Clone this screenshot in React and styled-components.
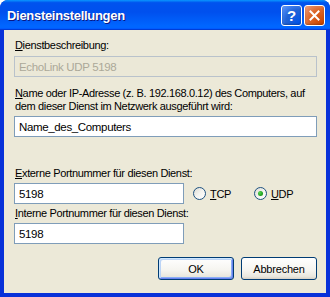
import React from "react";
import styled, { createGlobalStyle } from "styled-components";

const Global = createGlobalStyle`
  html, body {
    margin: 0;
    padding: 0;
    background: #ffffff;
  }
  body {
    font-family: "Liberation Sans", Arial, sans-serif;
    font-size: 11px;
  }
`

const Window = styled.div`
  width: 330px;
  height: 297px;
  box-sizing: border-box;
  display: flex;
  flex-direction: column;
  background: #0831d9;
  border-radius: 8px 8px 0 0;
  overflow: hidden;
`

const TitleBar = styled.div`
  height: 30px;
  flex: none;
  display: flex;
  align-items: center;
  justify-content: space-between;
  padding: 0 5px 0 7px;
  background: linear-gradient(
    180deg,
    #0997ff 0%,
    #0053ee 9%,
    #0050ee 40%,
    #0066ff 86%,
    #0066ff 92%,
    #005bff 95%,
    #003dd7 97%,
    #003dd7 100%
  );
`

const Title = styled.span`
  color: #ffffff;
  font-family: "Liberation Sans", Arial, sans-serif;
  font-weight: bold;
  font-size: 13px;
  letter-spacing: -0.3px;
  text-shadow: 1px 1px #0a1883;
`

const Controls = styled.div`
  display: flex;
  gap: 2px;
`

const CtrlButton = styled.div`
  width: 21px;
  height: 21px;
  box-sizing: border-box;
  border: 1px solid #ffffff;
  border-radius: 3px;
  display: flex;
  align-items: center;
  justify-content: center;
  color: #ffffff;
  font-weight: bold;
  font-size: 15px;
  background: ${(p) =>
    p.$close
      ? "radial-gradient(circle at 90% 90%, #cc4600 0%, #dc6527 55%, #e5855a 80%, #f2a684 100%)"
      : "radial-gradient(circle at 90% 90%, #0054e9 0%, #2263d5 55%, #4382f1 80%, #6b9cf5 100%)"};
  box-shadow: inset 0 -1px 2px rgba(0, 0, 0, 0.25);
`

const Client = styled.div`
  flex: 1;
  margin: 0 4px 4px 4px;
  background: #ece9d8;
  padding: 9px 9px 0 10px;
  display: flex;
  flex-direction: column;
  color: #000000;
  letter-spacing: -0.35px;
`

const Label = styled.div`
  line-height: 13px;
  padding-left: 1px;
  margin-top: ${(p) => p.$top || 0}px;
  white-space: nowrap;
`

const Key = styled.span`
  text-decoration: underline;
  text-underline-offset: 1px;
`

const Field = styled.div`
  height: 21px;
  box-sizing: border-box;
  width: ${(p) => p.$width || "auto"};
  margin-top: ${(p) => p.$top ?? 3}px;
  border: 1px solid ${(p) => (p.$disabled ? "#b9c2cb" : "#7f9db9")};
  background: ${(p) => (p.$disabled ? "#ebe8d7" : "#ffffff")};
  color: ${(p) => (p.$disabled ? "#aca899" : "#000000")};
  display: flex;
  align-items: center;
  padding-left: 4px;
  font-size: 11.5px;
`

const PortRow = styled.div`
  display: flex;
  align-items: center;
  margin-top: 3px;
`

const RadioGroup = styled.div`
  display: flex;
  align-items: center;
  margin-left: 9px;
  gap: 23px;
`

const Radio = styled.label`
  display: flex;
  align-items: center;
  gap: 4px;
  font-size: 11px;
`

const Circle = styled.span`
  width: 13px;
  height: 13px;
  box-sizing: border-box;
  border-radius: 50%;
  border: 1px solid #1c5180;
  background: linear-gradient(135deg, #dcdbd3 0%, #f4f4f0 50%, #ffffff 100%);
  display: flex;
  align-items: center;
  justify-content: center;
  &::after {
    content: "";
    width: 5px;
    height: 5px;
    border-radius: 50%;
    background: ${(p) => (p.$checked ? "radial-gradient(circle at 35% 35%, #55d751, #21a121 60%, #1a8a1a)" : "transparent")};
  }
`

const Buttons = styled.div`
  display: flex;
  justify-content: flex-end;
  gap: 7px;
  margin-top: 13px;
  padding-right: 0px;
`

const Button = styled.div`
  width: 76px;
  height: 23px;
  box-sizing: border-box;
  border: 1px solid #003c74;
  border-radius: 3px;
  display: flex;
  align-items: center;
  justify-content: center;
  font-size: 11px;
  letter-spacing: -0.2px;
  background: linear-gradient(180deg, #ffffff 0%, #f5f4ef 60%, #e9e7de 88%, #d6d0c5 100%);
  box-shadow: ${(p) =>
    p.$default
      ? "inset 1px 1px 0 #cee7ff, inset -1px -1px 0 #6982ee, inset 2px 2px 0 #bcd4f6, inset -2px -2px 0 #89adf5"
      : "none"};
`

export default function App() {
  return (
    <>
      <Global />
      <Window>
        <TitleBar>
          <Title>Diensteinstellungen</Title>
          <Controls>
            <CtrlButton>?</CtrlButton>
            <CtrlButton $close>
              <svg width="11" height="11" viewBox="0 0 11 11">
                <path d="M1.5 1.5 L9.5 9.5 M9.5 1.5 L1.5 9.5" stroke="#ffffff" strokeWidth="2" strokeLinecap="square" />
              </svg>
            </CtrlButton>
          </Controls>
        </TitleBar>
        <Client>
          <Label>
            <Key>D</Key>ienstbeschreibung:
          </Label>
          <Field $disabled $top={4}>EchoLink UDP 5198</Field>
          <Label $top={10}>
            <Key>N</Key>ame oder IP-Adresse (z. B. 192.168.0.12) des Computers, auf
          </Label>
          <Label>dem dieser Dienst im Netzwerk ausgeführt wird:</Label>
          <Field $top={3}>Name_des_Computers</Field>
          <Label $top={30}>
            <Key>E</Key>xterne Portnummer für diesen Dienst:
          </Label>
          <PortRow>
            <Field $width="170px" $top={0}>5198</Field>
            <RadioGroup>
              <Radio>
                <Circle />
                <span>
                  <Key>T</Key>CP
                </span>
              </Radio>
              <Radio>
                <Circle $checked />
                <span>
                  <Key>U</Key>DP
                </span>
              </Radio>
            </RadioGroup>
          </PortRow>
          <Label $top={3}>
            <Key>I</Key>nterne Portnummer für diesen Dienst:
          </Label>
          <Field $width="170px">5198</Field>
          <Buttons>
            <Button $default>OK</Button>
            <Button>Abbrechen</Button>
          </Buttons>
        </Client>
      </Window>
    </>
  );
}
